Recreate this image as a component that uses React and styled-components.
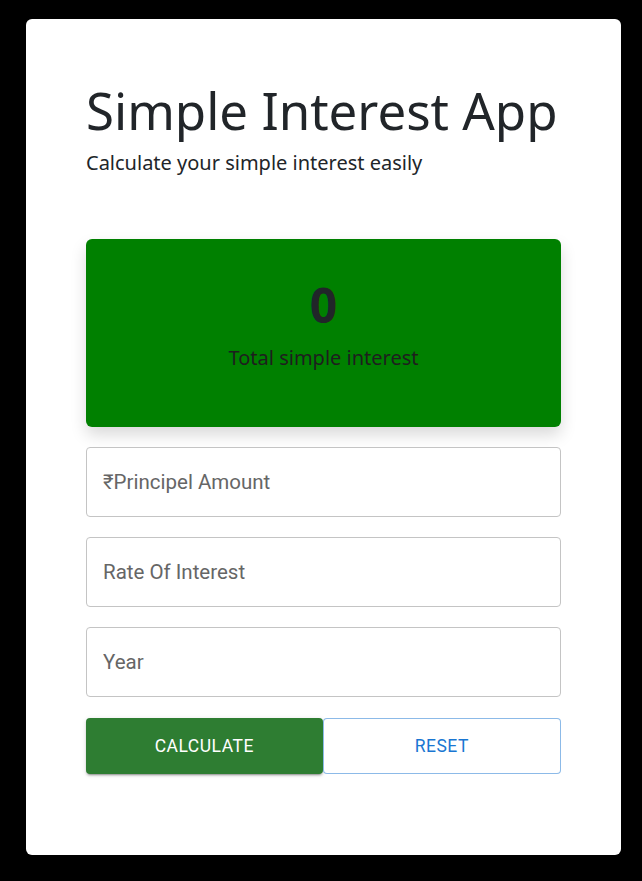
import React, { useState } from 'react';
import styled, { createGlobalStyle } from 'styled-components';

const GlobalStyle = createGlobalStyle`
  html, body {
    margin: 0;
    background: #000;
  }
  body {
    font-family: 'Noto Sans', 'Open Sans', sans-serif;
    color: #212529;
  }
`;

const Page = styled.div`
  height: 881px;
  padding: 19px 21px 26px 26px;
  box-sizing: border-box;
`;

const Card = styled.div`
  background: #fff;
  border-radius: 6px;
  height: 836px;
  box-sizing: border-box;
  padding: 61px 60px 60px;
`;

const Title = styled.h1`
  font-size: 51px;
  font-weight: 400;
  line-height: 60px;
  margin: 0;
  color: #212529;
  white-space: nowrap;
`;

const Lead = styled.p`
  font-size: 20px;
  margin: 8px 0 0;
  line-height: 1.5;
`;

const ResultBox = styled.div`
  margin-top: 61px;
  background: #008000;
  border-radius: 6px;
  height: 188px;
  box-shadow: 0 8px 16px rgba(0, 0, 0, 0.15);
  display: flex;
  flex-direction: column;
  align-items: center;
  padding-top: 37px;
  box-sizing: border-box;
`;

const Amount = styled.div`
  font-size: 48px;
  font-weight: 700;
  line-height: 1.2;
`;

const Caption = styled.div`
  font-size: 20px;
  margin-top: 10px;
  color: #1e1e1e;
`;

const Form = styled.div`
  margin-top: 20px;
  display: flex;
  flex-direction: column;
  gap: 20px;
`;

const Field = styled.input`
  height: 70px;
  box-sizing: border-box;
  border: 1px solid #c4c4c4;
  border-radius: 4px;
  padding: 0 16px;
  font-family: Roboto, sans-serif;
  font-size: 20.5px;
  color: #212121;
  outline: none;
  &::placeholder {
    color: #666;
  }
`;

const Actions = styled.div`
  display: flex;
  margin-top: 1px;
`;

const Button = styled.button`
  flex: 1;
  height: 56px;
  border-radius: 4px;
  font-family: Roboto, sans-serif;
  font-size: 17.5px;
  font-weight: 400;
  letter-spacing: 0.02857em;
  text-transform: uppercase;
  cursor: pointer;
  background: ${(p) => (p.$variant === 'contained' ? '#2e7d32' : '#fff')};
  color: ${(p) => (p.$variant === 'contained' ? '#fff' : '#1976d2')};
  border: ${(p) => (p.$variant === 'contained' ? 'none' : '1px solid rgba(25, 118, 210, 0.5)')};
  box-shadow: ${(p) =>
    p.$variant === 'contained'
      ? '0 3px 1px -2px rgba(0,0,0,0.2), 0 2px 2px 0 rgba(0,0,0,0.14), 0 1px 5px 0 rgba(0,0,0,0.12)'
      : 'none'};
`;

export default function App() {
  const [principal, setPrincipal] = useState('');
  const [rate, setRate] = useState('');
  const [year, setYear] = useState('');
  const [interest, setInterest] = useState(0);

  const calculate = () => {
    setInterest((Number(principal) * Number(rate) * Number(year)) / 100);
  };

  const reset = () => {
    setPrincipal('');
    setRate('');
    setYear('');
    setInterest(0);
  };

  return (
    <Page>
      <GlobalStyle />
      <Card>
        <Title>Simple Interest App</Title>
        <Lead>Calculate your simple interest easily</Lead>
        <ResultBox>
          <Amount>{interest}</Amount>
          <Caption>Total simple interest</Caption>
        </ResultBox>
        <Form>
          <Field placeholder="₹Principel Amount" value={principal} onChange={(e) => setPrincipal(e.target.value)} />
          <Field placeholder="Rate Of Interest" value={rate} onChange={(e) => setRate(e.target.value)} />
          <Field placeholder="Year" value={year} onChange={(e) => setYear(e.target.value)} />
          <Actions>
            <Button $variant="contained" onClick={calculate}>Calculate</Button>
            <Button $variant="outlined" onClick={reset}>Reset</Button>
          </Actions>
        </Form>
      </Card>
    </Page>
  );
}
